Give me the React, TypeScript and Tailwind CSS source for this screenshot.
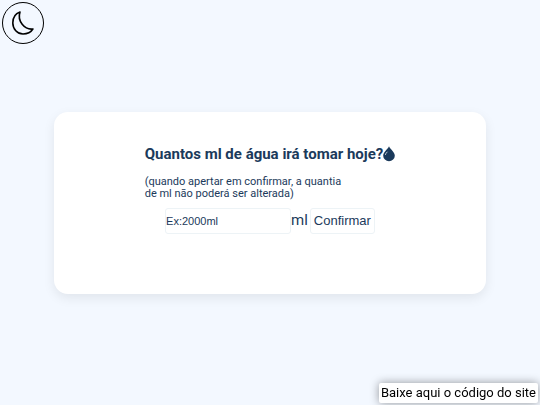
import React, { useState } from "react";

const MoonIcon: React.FC = () => (
  <svg viewBox="0 0 24 24" className="h-6 w-6" fill="none" stroke="currentColor" strokeWidth="1.6" strokeLinejoin="round" strokeLinecap="round">
    <path d="M9 1C4.500 2.500 1.800 6.800 1.800 12c0 6 4.500 11 10.200 11 4.400 0 8-2 9.900-5C13.500 19 6 10 9 1Z" />
  </svg>
);

const DropIcon: React.FC = () => (
  <svg viewBox="0 0 12 16" className="h-4 w-3" fill="currentColor">
    <path d="M6 .3C5.300 2.800.2 6 .2 9.800a5.800 5.400 0 0 0 11.600 0C11.800 6 6.700 2.800 6 .3Z" />
    <path d="M4.200 6C3.300 6.800 2.600 7.600 2.400 8.600" fill="none" stroke="#fff" strokeWidth=".7" strokeLinecap="round" />
  </svg>
);

const App: React.FC = () => {
  const [amount, setAmount] = useState<string>("");
  const [confirmed, setConfirmed] = useState<boolean>(false);

  const handleSubmit = (event: React.FormEvent<HTMLFormElement>) => {
    event.preventDefault();
    if (amount.trim() !== "") {
      setConfirmed(true);
    }
  };

  return (
    <div className="flex min-h-screen flex-col items-center justify-center bg-[#f3f8ff] font-['Roboto',sans-serif] text-[#1b3a5b]">
      <button
        type="button"
        aria-label="Modo escuro"
        className="fixed top-0.5 left-0.5 flex h-[42px] w-[42px] items-center justify-center rounded-full border border-black text-black"
      >
        <MoonIcon />
      </button>

      <main className="flex w-4/5 justify-center rounded-[14px] bg-white pt-8 pb-15 shadow-[0_4px_12px_rgba(0,0,0,0.08)]">
        <form onSubmit={handleSubmit}>
          <h1 className="flex items-center text-[15px] leading-5 font-bold">
            <label htmlFor="amount">Quantos ml de água irá tomar hoje?</label>
            <DropIcon />
          </h1>
          <p className="mt-3 text-[11px] leading-3">
            (quando apertar em confirmar, a quantia
            <br />
            de ml não poderá ser alterada)
          </p>
          <div className="mt-2 flex items-center justify-center">
            <input
              id="amount"
              type="text"
              value={amount}
              disabled={confirmed}
              onChange={(event) => setAmount(event.target.value)}
              placeholder="Ex:2000ml"
              className="h-[26px] w-[126px] rounded-[3px] border border-[#edf3f6] font-['Liberation_Sans',sans-serif] text-[11px] placeholder:text-[#1b3a5b]"
            />
            <span className="text-[15px]">ml</span>
            <button
              type="submit"
              disabled={confirmed}
              className="ml-0.5 h-[26px] rounded-[3px] border border-[#edf3f6] px-[3px] font-['Liberation_Sans',sans-serif] text-[13px]"
            >
              Confirmar
            </button>
          </div>
        </form>
      </main>

      <a
        href="#codigo"
        className="fixed right-0.5 bottom-0.5 rounded-[2px] bg-white px-0.5 text-[13px] leading-5 text-black shadow-[0_0_10px_rgba(0,0,0,0.4)]"
      >
        Baixe aqui o código do site
      </a>
    </div>
  );
};

export default App;
